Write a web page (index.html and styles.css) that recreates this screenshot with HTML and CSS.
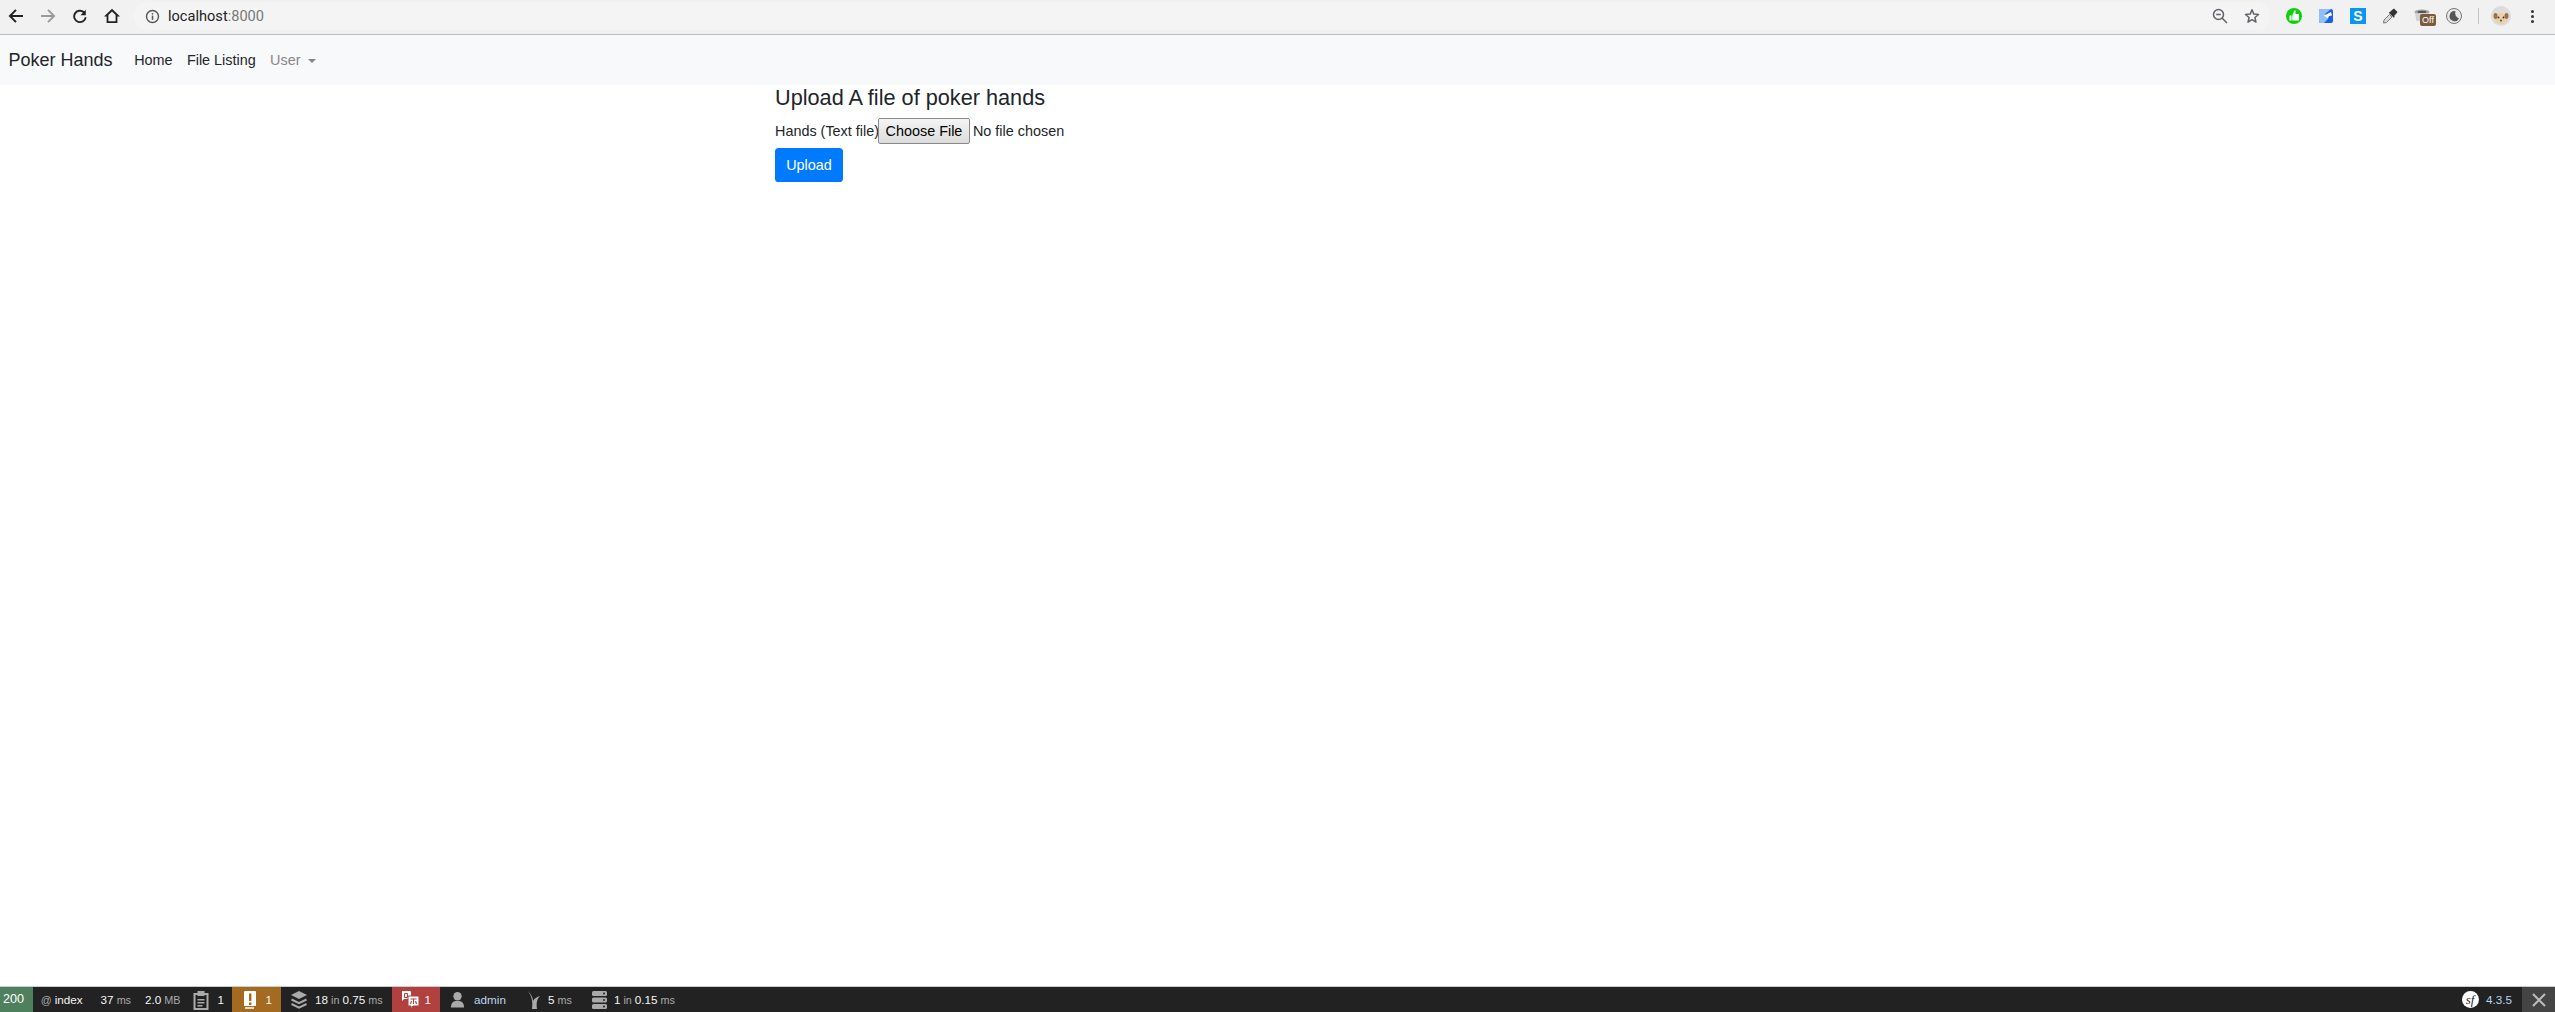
FILE: index.html
```html
<!DOCTYPE html>
<html lang="en">

<head>
    <meta charset="UTF-8">
    <title>Poker Hands</title>
    <link rel="stylesheet" href="styles.css">
</head>

<body>
    <!-- browser chrome -->
    <div class="browser-bar">
        <div class="nav-icons">
            <svg class="icon-btn" viewBox="0 0 16 16"><path d="M15 7H4.300l4.400-4.400L7.300 1.300 .6 8l6.700 6.700 1.400-1.300L4.300 9H15z" fill="#222"/></svg>
            <svg class="icon-btn" viewBox="0 0 16 16"><path d="M1 7h10.700L7.300 2.600l1.400-1.300L15.400 8l-6.700 6.700-1.400-1.300L11.700 9H1z" fill="#9a9a9a"/></svg>
            <svg class="icon-btn" viewBox="0 0 16 16"><path d="M13.800 1.800v5.400H8.400l2.500-2.500A4.800 4.800 0 1 0 12.700 9.200h1.900A6.700 6.700 0 1 1 12.300 3.300z" fill="#222"/></svg>
            <svg class="icon-btn" viewBox="0 0 16 16"><path d="M8 .8 0 8.400h2.600V15h10.800V8.400H16zM11.600 13.200H4.400V6.900L8 3.500l3.600 3.400z" fill="#222"/></svg>
        </div>
        <div class="omnibox">
            <svg class="info-icon" viewBox="0 0 16 16"><circle cx="8" cy="8" r="6.400" fill="none" stroke="#555" stroke-width="1.500"/><rect x="7.200" y="7" width="1.600" height="4.600" fill="#555"/><rect x="7.200" y="4.300" width="1.600" height="1.600" fill="#555"/></svg>
            <span class="url">localhost<span class="url-port">:8000</span></span>
            <div class="omnibox-right">
                <svg class="small-icon" viewBox="0 0 16 16"><circle cx="6.500" cy="6.500" r="5" fill="none" stroke="#5f6368" stroke-width="1.500"/><path d="M4.200 6.500h4.600M10 10l5 5" stroke="#5f6368" stroke-width="1.500"/></svg>
                <svg class="small-icon" viewBox="0 0 16 16"><path d="M8 1.800l1.800 4.300 4.700.4-3.600 3 1.100 4.600L8 11.700l-4 2.400 1.100-4.600-3.600-3 4.700-.4z" fill="none" stroke="#5f6368" stroke-width="1.500" stroke-linejoin="round"/></svg>
            </div>
        </div>
        <div class="extensions">
            <svg class="ext" viewBox="0 0 16 16"><circle cx="8" cy="8" r="8" fill="#0fd00f"/><path d="M3.500 7.500h2v5h-2zM6.300 7.500L8.300 2.500h1.200v3.500h3.500v6.500H6.300z" fill="#fff"/></svg>
            <svg class="ext" viewBox="0 0 16 16"><rect x="1" y="1" width="14" height="14" rx="2" fill="#1d5fe8"/><path d="M1 1h12L7 6l3 5-4 4H3a2 2 0 0 1-2-2z" fill="#8fc0fa"/><path d="M13 4L6 7.500l4 3 1-2.500 3-.5z" fill="#fff"/></svg>
            <svg class="ext" viewBox="0 0 16 16"><rect width="16" height="16" fill="#0a96f2"/><text x="8" y="13" text-anchor="middle" class="ext-s">S</text></svg>
            <svg class="ext" viewBox="0 0 16 16"><path d="M1.500 15l.5-3L7.500 6.500 10 9l-5.500 5.500z" fill="#ddd" stroke="#777"/><path d="M8 4l2-2 2-1.500 3.500 3.500L14 6l-2 2 .8.800-1 1-5-5 1-1z" fill="#333"/></svg>
            <div class="ext ext-bucket">
                <svg viewBox="0 0 16 16"><ellipse cx="8" cy="4" rx="7.500" ry="2.500" fill="#a5a5a5"/><ellipse cx="8" cy="4" rx="4.500" ry="1.300" fill="#555"/><path d="M1 5l1.500 8h11L15 5z" fill="#d0d0d0"/></svg>
                <span class="off-badge">Off</span>
            </div>
            <svg class="ext" viewBox="0 0 16 16"><circle cx="8" cy="8" r="7.500" fill="#e8e8e8" stroke="#777"/><path d="M9.500 3.200a5 5 0 1 0 3.500 7.300A5.500 5.500 0 0 1 9.500 3.200z" fill="#555"/></svg>
            <span class="ext-sep"></span>
            <div class="avatar">
                <svg viewBox="0 0 20 20"><circle cx="10" cy="10" r="10" fill="#dcdcdc"/><ellipse cx="10" cy="12.500" rx="6" ry="5.500" fill="#edcfa8"/><ellipse cx="4.500" cy="10" rx="2" ry="3" fill="#a0703f"/><ellipse cx="15.500" cy="10" rx="2" ry="3" fill="#a0703f"/><circle cx="7.500" cy="11.500" r=".9" fill="#333"/><circle cx="12.500" cy="11.500" r=".9" fill="#333"/><circle cx="10" cy="14.500" r="1" fill="#444"/></svg>
            </div>
            <div class="menu-dots"><i></i><i></i><i></i></div>
        </div>
    </div>

    <!-- navbar -->
    <nav class="navbar">
        <a class="brand" href="#">Poker Hands</a>
        <a class="nav-link" href="#">Home</a>
        <a class="nav-link" href="#">File Listing</a>
        <a class="nav-link muted dropdown" href="#">User</a>
    </nav>

    <main class="content">
        <h4>Upload A file of poker hands</h4>
        <form class="upload-form">
            <div class="form-row">
                <label for="hands">Hands (Text file)</label><input type="file" id="hands">
            </div>
            <button class="btn-upload" type="button">Upload</button>
        </form>
    </main>

    <!-- symfony toolbar -->
    <div class="sf-toolbar">
        <div class="sf-status">200</div>
        <div class="sf-block sf-route"><span class="unit">@</span><span class="val">index</span></div>
        <div class="sf-block sf-time"><span class="val">37</span><span class="unit">ms</span></div>
        <div class="sf-block sf-mem"><span class="val">2.0</span><span class="unit">MB</span></div>
        <div class="sf-block sf-forms">
            <svg class="sf-icon" viewBox="0 0 16 20"><path d="M1.500 4h13v15h-13z" fill="none" stroke="#aaa" stroke-width="2"/><path d="M4.500 1h7v5h-7z" fill="#aaa"/><path d="M4.500 9h7v1.500h-7zM4.500 12h7v1.500h-7zM4.500 15h5v1.500h-5z" fill="#aaa"/></svg>
            <span class="val">1</span>
        </div>
        <div class="sf-block sf-warn">
            <svg class="sf-icon" viewBox="0 0 14 20"><path d="M2 1h10a1 1 0 0 1 1 1v14H1V2a1 1 0 0 1 1-1z" fill="#fff"/><path d="M6 3.500h2.400v7.500H6zM6 12.500h2.400V15H6z" fill="#a46a1f"/><path d="M2 18h9" stroke="#fff" stroke-width="1.500"/></svg>
            <span class="val">1</span>
        </div>
        <div class="sf-block sf-db">
            <svg class="sf-icon" viewBox="0 0 16 20"><path d="M8 1l8 4-8 4-8-4z" fill="#aaa"/><path d="M.5 9.500l7.500 3.700 7.500-3.700M.5 14l7.500 3.700L15.500 14" fill="none" stroke="#aaa" stroke-width="2"/></svg>
            <span class="val">18</span><span class="unit">in</span><span class="val">0.75</span><span class="unit">ms</span>
        </div>
        <div class="sf-block sf-trans">
            <svg class="sf-icon" viewBox="0 0 18 20"><path d="M1 1h8a1 1 0 0 1 1 1v7H3l-2 2z" fill="#fff"/><path d="M7 6h10a1 1 0 0 1 1 1v9h-6l-2 3v-3H7z" fill="#fff" stroke="#b0413e"/><path d="M9.500 9h6M12.500 9v5M10.500 11l-1 3M14.500 11l1 3" stroke="#b0413e" stroke-width="1.100" fill="none"/><path d="M3.500 3.500h3v4h-3z" fill="none" stroke="#b0413e"/></svg>
            <span class="val">1</span>
        </div>
        <div class="sf-block sf-user">
            <svg class="sf-icon" viewBox="0 0 14 20"><circle cx="7" cy="6" r="4.500" fill="#aaa"/><path d="M0 18c0-5 2-7 7-7s7 2 7 7z" fill="#aaa"/></svg>
            <span class="val admin">admin</span>
        </div>
        <div class="sf-block sf-twig">
            <svg class="sf-icon" viewBox="0 0 12 20"><path d="M0 1c3 3 5 7 5 10 1-2 3-4 7-5-3 3-4 7-3 13H4C5 12 4 7 0 1z" fill="#aaa"/></svg>
            <span class="val">5</span><span class="unit">ms</span>
        </div>
        <div class="sf-block sf-server">
            <svg class="sf-icon" viewBox="0 0 15 20"><rect y="1" width="15" height="5" rx="1.500" fill="#aaa"/><rect y="7.500" width="15" height="5" rx="1.500" fill="#aaa"/><rect y="14" width="15" height="5" rx="1.500" fill="#aaa"/><circle cx="12" cy="3.500" r="1" fill="#222"/><circle cx="12" cy="10" r="1" fill="#222"/><circle cx="12" cy="16.500" r="1" fill="#222"/></svg>
            <span class="val">1</span><span class="unit">in</span><span class="val">0.15</span><span class="unit">ms</span>
        </div>
        <div class="sf-version">
            <svg class="sf-logo" viewBox="0 0 17 17"><circle cx="8.500" cy="8.500" r="8.500" fill="#fff"/><text x="8" y="12.500" text-anchor="middle" class="sf-logo-text">sf</text></svg>
            <span class="ver">4.3.5</span>
        </div>
        <div class="sf-close">
            <svg viewBox="0 0 14 14"><path d="M1 1l12 12M13 1L1 13" stroke="#bbb" stroke-width="2"/></svg>
        </div>
    </div>
</body>

</html>
```

FILE: styles.css
```css
* {
    box-sizing: border-box;
}

html, body {
    height: 100%;
}

body {
    margin: 0;
    font-family: "Liberation Sans", Arial, sans-serif;
    font-size: 14.4px;
    color: #212529;
    background: #fff;
    display: flex;
    flex-direction: column;
    overflow: hidden;
}

/* browser chrome */
.browser-bar {
    height: 35px;
    flex: none;
    display: flex;
    align-items: center;
    background: #f1f1f1;
    border-bottom: 1px solid #bcbcbc;
    padding: 0 0 2px 8px;
}

.nav-icons {
    display: flex;
    gap: 16px;
    align-items: center;
}

.icon-btn {
    width: 16px;
    height: 16px;
}

.omnibox {
    flex: 1;
    display: flex;
    align-items: center;
    height: 28px;
    margin-left: 14px;
    padding-left: 11px;
    background: #f4f4f4;
    border-radius: 14px;
}

.info-icon {
    width: 15px;
    height: 15px;
}

.url {
    font-family: Roboto, "Liberation Sans", sans-serif;
    font-size: 14.6px;
    color: #222;
    margin-left: 8px;
}

.url-port {
    color: #777;
}

.omnibox-right {
    margin-left: auto;
    display: flex;
    gap: 16px;
    padding-right: 10px;
}

.small-icon {
    width: 16px;
    height: 16px;
}

.extensions {
    display: flex;
    align-items: center;
    gap: 16px;
    padding: 0 21px 0 16px;
}

.ext {
    width: 16px;
    height: 16px;
    flex: none;
}

.ext-s {
    font-family: "Liberation Sans", sans-serif;
    font-size: 14px;
    font-weight: bold;
    fill: #fff;
}

.ext-bucket {
    position: relative;
}

.ext-bucket svg {
    display: block;
    width: 16px;
    height: 16px;
}

.off-badge {
    position: absolute;
    left: 6px;
    top: 6px;
    width: 16px;
    height: 12px;
    background: #7a5c3c;
    color: #fff;
    font-size: 9px;
    line-height: 12px;
    text-align: center;
    border-radius: 2px;
}

.ext-sep {
    width: 1px;
    height: 16px;
    margin-right: -4px;
    background: #c4c4c4;
}

.avatar svg {
    display: block;
    width: 20px;
    height: 20px;
}

.menu-dots {
    display: flex;
    flex-direction: column;
    gap: 2px;
    margin-left: 4px;
}

.menu-dots i {
    display: block;
    width: 3px;
    height: 3px;
    background: #333;
    border-radius: 50%;
}

/* navbar */
.navbar {
    height: 50px;
    flex: none;
    display: flex;
    align-items: center;
    padding: 0 8.5px;
    background: #f8f9fa;
}

.navbar a {
    text-decoration: none;
}

.brand {
    font-size: 18px;
    color: #212529;
    margin-right: 14.4px;
}

.nav-link {
    font-size: 14.4px;
    color: #212529;
    padding: 0 7.2px;
}

.nav-link.muted {
    color: #868686;
}

.dropdown::after {
    content: "";
    display: inline-block;
    margin-left: 7.5px;
    vertical-align: 2px;
    border-top: 4.3px solid #868686;
    border-left: 4.3px solid transparent;
    border-right: 4.3px solid transparent;
}

/* page */
.content {
    flex: 1;
    padding-left: 775px;
}

h4 {
    margin: 0 0 7px;
    font-size: 21.7px;
    font-weight: 400;
    line-height: 26px;
}

.form-row {
    display: flex;
    align-items: center;
    height: 26px;
}

.form-row label {
    margin-right: -1px;
}

.form-row input[type="file"] {
    font: inherit;
    color: #212529;
}

.form-row input[type="file"]::file-selector-button {
    font: inherit;
    color: #000;
    width: 92px;
    height: 26px;
    padding: 0;
    margin-right: 3px;
    border: 1px solid #8a8a8a;
    border-radius: 2px;
    background: linear-gradient(#f4f4f4, #dcdcdc);
}

.btn-upload {
    display: block;
    width: 68px;
    height: 34px;
    margin-top: 4px;
    padding: 0;
    border: 0;
    border-radius: 3.6px;
    background: #007bff;
    color: #fff;
    font: inherit;
}

/* symfony toolbar */
.sf-toolbar {
    height: 26px;
    flex: none;
    display: flex;
    align-items: center;
    background: #222;
    border-top: 1px solid #ccc;
    color: #f5f5f5;
    font-size: 11.7px;
}

.sf-status {
    width: 33px;
    height: 100%;
    padding-left: 3px;
    background: #4f805d;
    color: #fff;
    font-size: 12.6px;
    line-height: 25px;
}

.sf-block {
    display: flex;
    align-items: center;
    gap: 3px;
    height: 100%;
}

.val {
    color: #f5f5f5;
}

.unit {
    color: #aaa;
    font-size: 10.8px;
}

.admin {
    color: #b9d6f0;
}

.sf-icon {
    width: 16px;
    height: 20px;
    flex: none;
    margin-right: 5px;
}

.sf-route {
    padding: 0 18px 0 7.7px;
}

.sf-time {
    padding-right: 14px;
}

.sf-mem {
    padding-right: 13px;
}

.sf-forms {
    padding-right: 7.5px;
}

.sf-warn {
    background: #a46a1f;
    padding: 0 9px 0 11px;
}

.sf-warn .sf-icon {
    width: 14px;
    margin-right: 6px;
}

.sf-db {
    padding: 0 9px 0 10px;
}

.sf-trans {
    background: #b0413e;
    padding: 0 9px;
}

.sf-trans .sf-icon {
    width: 18px;
    margin-right: 3px;
}

.sf-user {
    padding: 0 22px 0 11px;
}

.sf-user .sf-icon {
    width: 13px;
    margin-right: 7px;
}

.sf-twig {
    padding-right: 20px;
}

.sf-twig .sf-icon {
    width: 12px;
}

.sf-server .sf-icon {
    width: 15px;
    margin-right: 4px;
}

.sf-version {
    margin-left: auto;
    display: flex;
    align-items: center;
    gap: 7px;
    padding-right: 10px;
}

.sf-logo {
    width: 17px;
    height: 17px;
}

.sf-logo-text {
    font-family: "Liberation Serif", serif;
    font-size: 13px;
    font-style: italic;
    fill: #222;
}

.ver {
    color: #b9d6f0;
}

.sf-close {
    width: 33px;
    height: 100%;
    background: #444;
    display: flex;
    align-items: center;
    justify-content: center;
}

.sf-close svg {
    width: 14px;
    height: 14px;
}
```
